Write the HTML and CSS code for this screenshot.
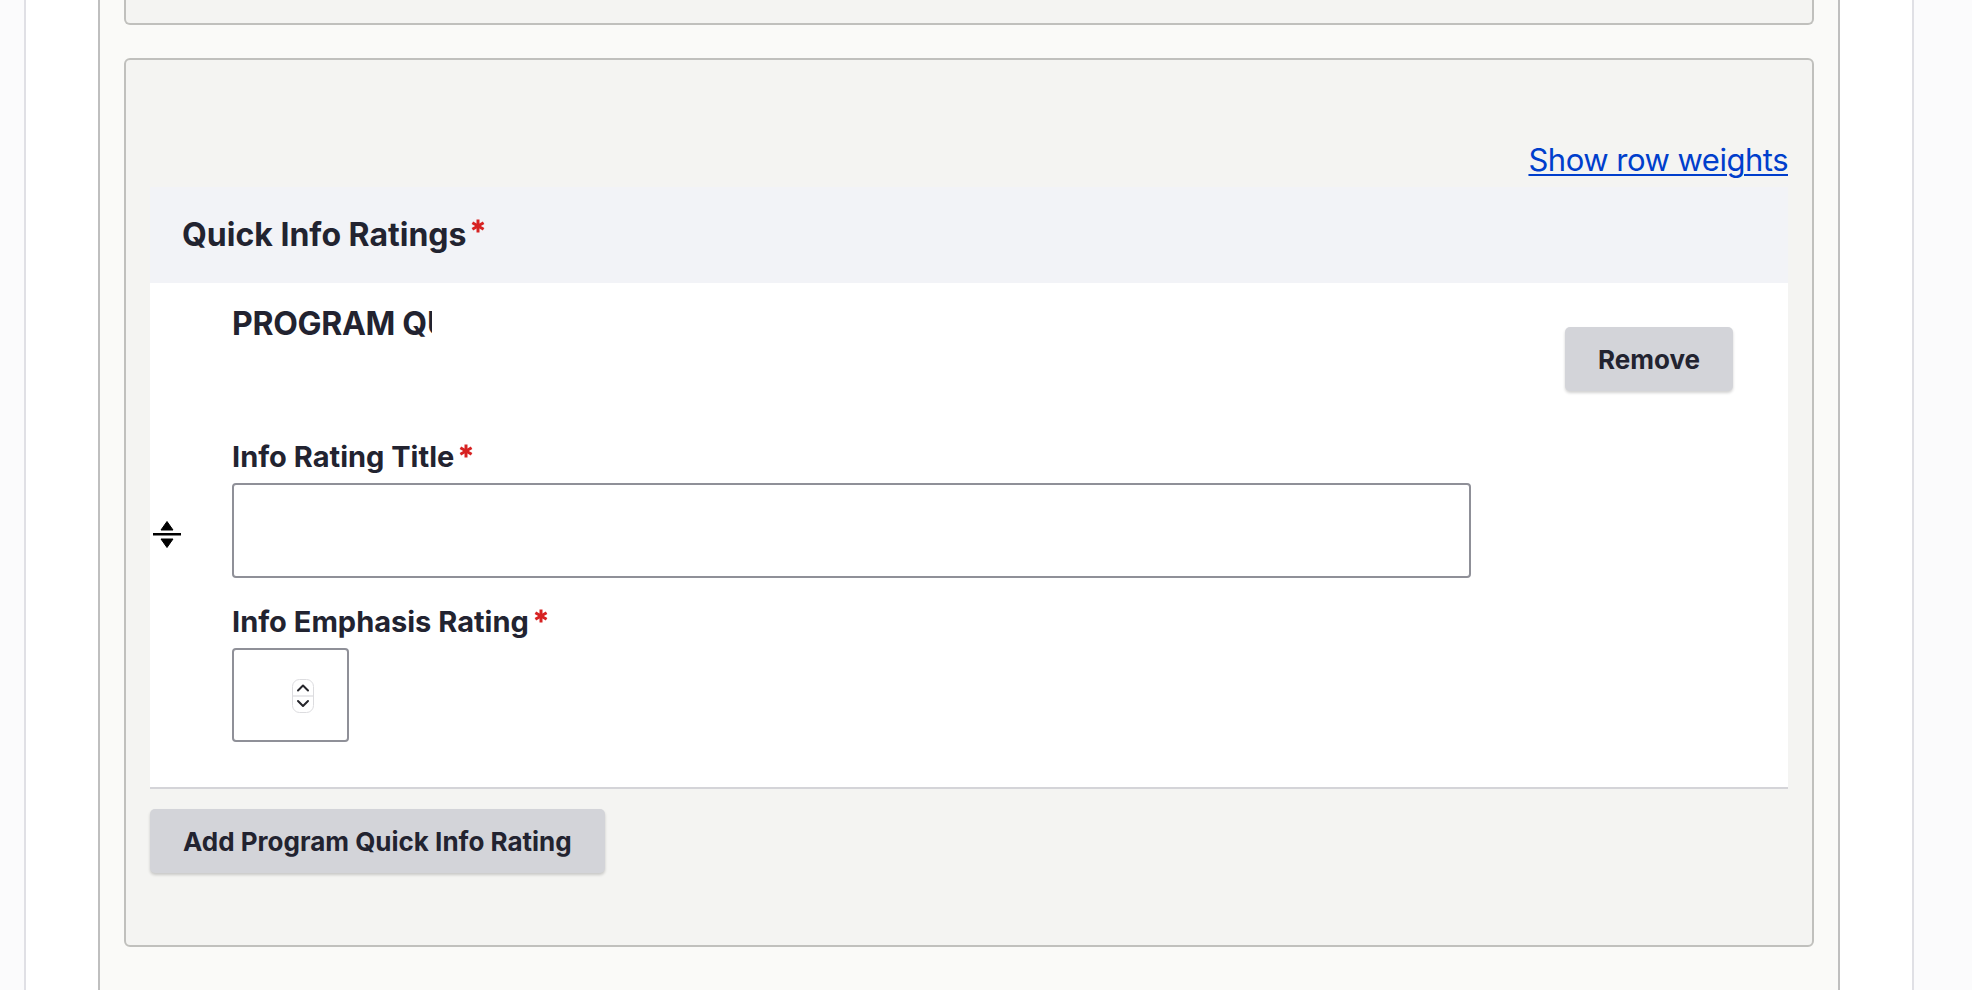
FILE: index.html
```html
<!DOCTYPE html>
<html lang="en">
<head>
    <meta charset="UTF-8">
    <meta name="viewport" content="width=device-width, initial-scale=1.0">
    <title>Edit Program</title>
    <link rel="stylesheet" href="styles.css">
</head>
<body>
    <div class="page">
        <div class="region-content">
            <div class="fieldset fieldset--tail"></div>

            <div class="fieldset">
                <div class="toggle-weight">
                    <a href="#" class="toggle-weight__link">Show row weights</a>
                </div>

                <div class="multiple-table">
                    <div class="multiple-table__head">
                        <h4 class="field-label form-required">Quick Info Ratings</h4>
                    </div>

                    <div class="multiple-table__row">
                        <div class="drag-cell">
                            <a href="#" class="tabledrag-handle" title="Change order">
                                <svg width="28" height="29" viewBox="0 0 28 29">
                                    <path d="M8 10 L14 1.5 L20 10 Z" fill="#000" stroke="#000" stroke-width="1" stroke-linejoin="round"/>
                                    <rect x="0" y="13" width="28" height="2.5" fill="#000"/>
                                    <path d="M8 19 L20 19 L14 27.5 Z" fill="#000" stroke="#000" stroke-width="1" stroke-linejoin="round"/>
                                </svg>
                            </a>
                        </div>

                        <div class="paragraph-cell">
                            <div class="paragraph-type">PROGRAM QUICK INFO RATING</div>

                            <div class="form-item">
                                <label for="info-title" class="form-item__label form-required">Info Rating Title</label>
                                <input type="text" id="info-title" class="form-text">
                            </div>

                            <div class="form-item form-item--last">
                                <label for="info-emphasis" class="form-item__label form-required">Info Emphasis Rating</label>
                                <div class="number-field">
                                    <input type="number" id="info-emphasis" class="form-number">
                                    <span class="number-field__spin">
                                        <svg width="22" height="34" viewBox="0 0 22 34">
                                            <rect x="0.5" y="0.5" width="21" height="33" rx="7" fill="#fff" stroke="#dcdcdf"/>
                                            <line x1="1" y1="17" x2="21" y2="17" stroke="#e2e2e5" stroke-width="1.5"/>
                                            <polyline points="6,11.5 11,6.5 16,11.5" fill="none" stroke="#26262b" stroke-width="2" stroke-linecap="round" stroke-linejoin="round"/>
                                            <polyline points="6,22 11,27 16,22" fill="none" stroke="#26262b" stroke-width="2" stroke-linecap="round" stroke-linejoin="round"/>
                                        </svg>
                                    </span>
                                </div>
                            </div>
                        </div>

                        <div class="actions-cell">
                            <button type="button" class="button">Remove</button>
                        </div>
                    </div>
                </div>

                <div class="add-more">
                    <button type="button" class="button">Add Program Quick Info Rating</button>
                </div>
            </div>
        </div>
    </div>
</body>
</html>
```

FILE: styles.css
```css
html, body {
    height: 100%;
}
body {
    margin: 0;
    background-color: #fbfbfc;
    font-family: "Inter", "Noto Sans", sans-serif;
    color: #222330;
}
* {
    box-sizing: border-box;
}

/* outer page frame and content column */
.page {
    min-height: 100%;
    margin: 0 58px 0 24px;
    padding: 0 72px;
    background-color: #fff;
    border-left: 2px solid #e0e0e5;
    border-right: 2px solid #e0e0e5;
}
.region-content {
    min-height: 100vh;
    padding: 0 24px;
    background-color: #fafaf8;
    border-left: 2px solid #bfbfbf;
    border-right: 2px solid #bfbfbf;
}

/* fieldsets */
.fieldset {
    background-color: #f4f4f2;
    border: 2px solid #c0c0bd;
    border-radius: 6px;
    padding: 80px 24px 72px;
}
.fieldset--tail {
    height: 25px;
    padding: 0;
    border-top: 0;
    border-radius: 0 0 6px 6px;
    margin-bottom: 33px;
}

/* row weights toggle */
.toggle-weight {
    text-align: right;
    font-size: 31px;
    line-height: 40px;
    margin-bottom: 7px;
}
.toggle-weight__link {
    color: #003ecc;
    letter-spacing: -0.5px;
    text-decoration: underline;
    text-decoration-thickness: 2px;
    text-underline-offset: 3px;
}

/* multiple value table */
.multiple-table__head {
    background-color: #f2f3f7;
    padding: 28px 32px;
}
.field-label {
    margin: 0;
    font-size: 32px;
    line-height: 40px;
    font-weight: 700;
}
.form-required::after {
    content: "";
    display: inline-block;
    width: 14px;
    height: 14px;
    margin-left: 5px;
    vertical-align: top;
    background-repeat: no-repeat;
    background-image: url("data:image/svg+xml,%3Csvg xmlns='http://www.w3.org/2000/svg' width='14' height='14' viewBox='0 0 14 14'%3E%3Cg stroke='%23d72222' stroke-width='3'%3E%3Cline x1='7' y1='0.5' x2='7' y2='13.5'/%3E%3Cline x1='1.4' y1='3.8' x2='12.6' y2='10.2'/%3E%3Cline x1='1.4' y1='10.2' x2='12.6' y2='3.8'/%3E%3C/g%3E%3C/svg%3E");
}
.field-label.form-required::after {
    margin-top: 4px;
}
.form-item__label.form-required::after {
    margin-top: 5px;
}

.multiple-table__row {
    display: grid;
    grid-template-columns: 82px 1fr auto;
    background-color: #fff;
    border-bottom: 2px solid #d4d4d8;
}
.drag-cell {
    display: flex;
    align-items: center;
    padding-left: 3px;
}
.tabledrag-handle {
    display: block;
    width: 28px;
    height: 29px;
    margin-top: -2px;
}
.tabledrag-handle svg {
    display: block;
}

.paragraph-cell {
    padding: 21px 0 45px;
}
.paragraph-type {
    width: 200px;
    overflow: hidden;
    white-space: nowrap;
    font-size: 32px;
    line-height: 40px;
    font-weight: 700;
    letter-spacing: -0.3px;
    margin-bottom: 95px;
}

.form-item {
    margin-bottom: 26px;
}
.form-item--last {
    margin-bottom: 0;
}
.form-item__label {
    display: block;
    font-size: 29px;
    line-height: 36px;
    font-weight: 700;
    margin-bottom: 8px;
}
.form-text,
.form-number {
    display: block;
    height: 95px;
    border: 2px solid #8f9098;
    border-radius: 4px;
    background-color: #fff;
    font: inherit;
    padding: 0 16px;
}
.form-text {
    width: 1239px;
}
.form-number {
    width: 117px;
    height: 94px;
    -moz-appearance: textfield;
}
.form-number::-webkit-inner-spin-button,
.form-number::-webkit-outer-spin-button {
    -webkit-appearance: none;
    margin: 0;
}
.number-field {
    position: relative;
    width: 117px;
}
.number-field__spin {
    position: absolute;
    right: 35px;
    top: 31px;
    width: 22px;
    height: 34px;
}
.number-field__spin svg {
    display: block;
}

.actions-cell {
    padding: 44px 55px 0 0;
}

/* buttons */
.button {
    display: block;
    height: 64px;
    padding: 0 33px;
    border: 0;
    border-radius: 5px;
    background-color: #d3d4d9;
    color: #222330;
    font-family: inherit;
    font-size: 26px;
    font-weight: 700;
    box-shadow: 0 2px 3px rgba(0, 0, 0, 0.18);
    cursor: pointer;
}
.add-more {
    margin-top: 20px;
}
```
